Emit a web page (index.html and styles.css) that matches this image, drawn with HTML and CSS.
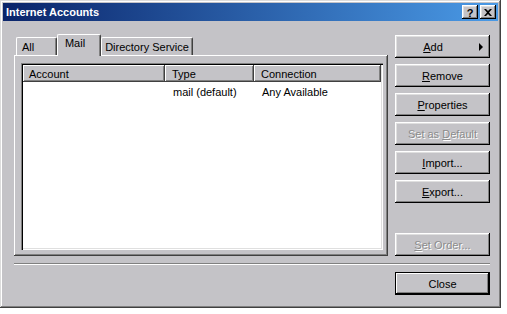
FILE: index.html
```html
<!DOCTYPE html>
<html lang="en">
<head>
  <meta charset="UTF-8" />
  <meta name="viewport" content="width=device-width, initial-scale=1.0" />
  <title>Internet Accounts</title>
  <link rel="stylesheet" href="styles.css">
</head>
<body>

  <div class="window">
    <div class="titlebar">
      <span class="title">Internet Accounts</span>
      <div class="caption-buttons">
        <div class="cap-btn help-btn">?</div>
        <div class="cap-btn">
          <svg width="8" height="7" viewBox="0 0 8 7">
            <path d="M0 0h2l2 2 2-2h2L5 3.5 8 7H6L4 5 2 7H0l3-3.5z" fill="#000" />
          </svg>
        </div>
      </div>
    </div>

    <div class="dialog">
      <div class="main">
        <div class="tab-area">
          <div class="tabs">
            <div class="tab tab-all">All</div>
            <div class="tab tab-mail active">Mail</div>
            <div class="tab tab-dir">Directory Service</div>
          </div>
          <div class="panel">
            <div class="listview">
              <div class="list-header">
                <div class="col col-account">Account</div>
                <div class="col col-type">Type</div>
                <div class="col col-conn">Connection</div>
              </div>
              <div class="list-row">
                <div class="cell col-account"></div>
                <div class="cell col-type">mail (default)</div>
                <div class="cell col-conn">Any Available</div>
              </div>
            </div>
          </div>
        </div>

        <div class="actions">
          <button class="btn btn-add"><span class="btn-label"><u>A</u>dd</span><span class="arrow"></span></button>
          <button class="btn"><u>R</u>emove</button>
          <button class="btn"><u>P</u>roperties</button>
          <button class="btn disabled">Set as <u>D</u>efault</button>
          <button class="btn"><u>I</u>mport...</button>
          <button class="btn"><u>E</u>xport...</button>
          <button class="btn disabled set-order"><u>S</u>et Order...</button>
        </div>
      </div>

      <div class="separator"></div>

      <div class="footer">
        <button class="btn btn-default">Close</button>
      </div>
    </div>
  </div>

</body>
</html>
```

FILE: styles.css
```css
body {
  margin: 0;
  background: #ffffff;
  font-family: "Liberation Sans", Arial, sans-serif;
  font-size: 11px;
  color: #000;
}

.window {
  width: 501px;
  height: 308px;
  box-sizing: border-box;
  padding: 3px;
  background: #c4c3c7;
  box-shadow: inset -1px -1px #404040, inset 1px 1px #dcdcdc,
              inset -2px -2px #808080, inset 2px 2px #ffffff;
}

.titlebar {
  height: 18px;
  display: flex;
  align-items: center;
  justify-content: space-between;
  padding: 0 2px 0 3px;
  background: linear-gradient(to right, #0a246a, #4a9ae6);
}

.title {
  color: #ffffff;
  font-weight: bold;
  font-size: 11px;
}

.caption-buttons {
  display: flex;
  gap: 2px;
}

.cap-btn {
  width: 16px;
  height: 14px;
  box-sizing: border-box;
  display: flex;
  align-items: center;
  justify-content: center;
  background: #c4c3c7;
  font-weight: bold;
  font-size: 11px;
  box-shadow: inset -1px -1px #000, inset 1px 1px #ffffff,
              inset -2px -2px #808080, inset 2px 2px #dfdfdf;
}

.help-btn {
  padding-top: 1px;
}

.dialog {
  padding: 13px 8px 0 11px;
}

.main {
  display: flex;
  gap: 7px;
  height: 222px;
}

.tab-area {
  width: 374px;
  display: flex;
  flex-direction: column;
}

.tabs {
  display: flex;
  align-items: flex-end;
  height: 21px;
  padding-left: 2px;
}

.tab {
  height: 18px;
  box-sizing: border-box;
  padding-top: 3px;
  text-align: center;
  border-top: 1px solid #ffffff;
  border-left: 1px solid #ffffff;
  border-right: 1px solid #404040;
  border-radius: 2px 2px 0 0;
  box-shadow: inset -1px 0 #808080;
}

.tab-all {
  width: 41px;
  text-align: left;
  padding-left: 5px;
}

.tab-mail {
  width: 44px;
  padding-right: 8px;
}

.tab-dir {
  width: 92px;
}

.tab.active {
  height: 22px;
  margin-bottom: -1px;
  padding-top: 2px;
  background: #c4c3c7;
  position: relative;
  z-index: 1;
}

.panel {
  flex: 1;
  padding: 8px 5px 6px 7px;
  box-shadow: inset -1px -1px #404040, inset 1px 1px #ffffff,
              inset -2px -2px #808080;
}

.listview {
  height: 100%;
  box-sizing: border-box;
  padding: 2px;
  background: #ffffff;
  box-shadow: inset 1px 1px #808080, inset 2px 2px #000,
              inset -1px -1px #ffffff, inset -2px -2px #dfdfdf;
}

.list-header {
  display: flex;
  height: 17px;
}

.col {
  box-sizing: border-box;
  padding: 3px 0 0 7px;
  background: #c4c3c7;
  box-shadow: inset -1px -1px #404040, inset 1px 1px #ffffff,
              inset -2px -2px #808080;
}

.col-account {
  width: 142px;
}

.list-header .col-account {
  padding-left: 6px;
}

.col-type {
  width: 89px;
}

.col-conn {
  width: 127px;
}

.list-row {
  display: flex;
  height: 18px;
}

.cell {
  box-sizing: border-box;
  padding: 4px 0 0 8px;
}

.actions {
  width: 95px;
  padding-top: 1px;
  display: flex;
  flex-direction: column;
  gap: 6px;
}

.btn {
  width: 95px;
  height: 23px;
  padding: 0;
  border: none;
  font-family: "Liberation Sans", Arial, sans-serif;
  font-size: 11px;
  color: #000;
  background: #c4c3c7;
  box-shadow: inset -1px -1px #000, inset 1px 1px #ffffff,
              inset -2px -2px #808080, inset 2px 2px #dfdfdf;
}

.btn-add {
  display: flex;
  align-items: center;
  padding: 0 7px 0 2px;
}

.btn-label {
  flex: 1;
  text-align: center;
  padding-right: 10px;
}

.arrow {
  width: 0;
  height: 0;
  border-top: 4px solid transparent;
  border-bottom: 4px solid transparent;
  border-left: 4px solid #000;
}

.btn.disabled {
  color: #8c8c8c;
  text-shadow: 1px 1px #ffffff;
}

.set-order {
  margin-top: auto;
}

.separator {
  margin-top: 7px;
  height: 0;
  border-top: 1px solid #808080;
  border-bottom: 1px solid #ffffff;
}

.footer {
  display: flex;
  justify-content: flex-end;
  margin-top: 7px;
}

.btn-default {
  box-shadow: inset 0 0 0 1px #000, inset -2px -2px #000, inset 2px 2px #ffffff,
              inset -3px -3px #808080;
}
```
